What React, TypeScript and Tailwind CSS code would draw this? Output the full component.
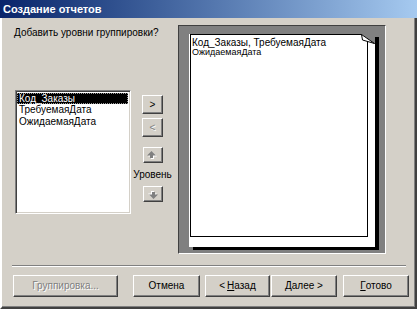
const raised =
  'border border-t-white border-l-white border-r-[#404040] border-b-[#404040] shadow-[inset_-1px_-1px_0_#808080] bg-[#d4d0c8]';
const disabledText = 'text-[#808080] [text-shadow:1px_1px_0_#ffffff]';

function Btn({ w, h, children, disabled }: { w: string; h: string; children: React.ReactNode; disabled?: boolean }) {
  return (
    <div className={`${raised} ${w} ${h} flex items-center justify-center text-[10px] leading-none ${disabled ? disabledText : 'text-black'}`}>
      {children}
    </div>
  );
}

function Arrow({ down }: { down?: boolean }) {
  const pts = '4.5,0 9,4.5 6,4.5 6,7 3,7 3,4.5 0,4.5';
  return (
    <svg width="11" height="9" viewBox="0 0 11 9" className={down ? 'rotate-180' : ''}>
      <polygon points={pts} fill="#ffffff" transform="translate(1 1)" />
      <polygon points={pts} fill="#808080" />
    </svg>
  );
}

export default function App() {
  return (
    <div className="w-[417px] h-[309px] flex flex-col bg-[#d4d0c8] overflow-hidden font-['Liberation_Sans',Arial,sans-serif]">
      {/* Title bar */}
      <div className="h-[18px] shrink-0 flex items-center pl-[3px] bg-gradient-to-r from-[#0a246a] to-[#a6caf0] text-white font-bold text-[11px]">
        Создание отчетов
      </div>

      {/* Body */}
      <div className="flex-1 flex flex-col border-l-2 border-l-[#ffffff] border-r-2 border-r-[#404040] border-b-2 border-b-[#404040] shadow-[inset_-1px_-1px_0_#808080]">
        <div className="flex pt-[7px] pl-[12px]">
          {/* Left column */}
          <div className="w-[164px] flex flex-col">
            <div className="mt-[1px] text-[10px] leading-[13px] text-black">Добавить уровни группировки?</div>
            <div className="flex mt-[51px] ml-[1px]">
              <div className="w-[116px] h-[124px] bg-white border border-t-[#808080] border-l-[#808080] border-r-white border-b-white shadow-[inset_1px_1px_0_#404040,inset_-1px_-1px_0_#d4d0c8] p-[2px] pl-[1px] text-[10px] leading-[12px]">
                <div className="bg-black text-white border border-dotted border-[#999999] px-[1px] h-[11px] leading-[9px]">Код_Заказы</div>
                <div className="px-[2px] text-black">ТребуемаяДата</div>
                <div className="px-[2px] text-black">ОжидаемаяДата</div>
              </div>
              <div className="ml-[11px] w-[21px] flex flex-col items-center">
                <div className="mt-[5px]">
                  <Btn w="w-[21px]" h="h-[19px]">&gt;</Btn>
                </div>
                <div className="mt-[4px]">
                  <Btn w="w-[21px]" h="h-[19px]" disabled>&lt;</Btn>
                </div>
                <div className="mt-[10px]">
                  <Btn w="w-[20px]" h="h-[16px]"><Arrow /></Btn>
                </div>
                <div className="mt-[5px] h-[13px] text-[10px] leading-[13px] whitespace-nowrap text-black">Уровень</div>
                <div className="mt-[5px]">
                  <Btn w="w-[20px]" h="h-[16px]"><Arrow down /></Btn>
                </div>
              </div>
            </div>
          </div>

          {/* Preview frame */}
          <div className="w-[208px] h-[229px] bg-[#808080] border border-t-[#404040] border-l-[#404040] border-r-white border-b-white pt-[8px] pl-[10px]">
            <div className="relative w-[186px] h-[213px] bg-white pl-[1px] shadow-[4px_3px_0_#000000]">
              <div className="w-[178px] h-[203px] border border-black pl-[1px] pt-[3px] text-black">
                <div className="text-[10px] leading-[10px]">Код_Заказы, ТребуемаяДата</div>
                <div className="text-[9px] leading-[9px]">ОжидаемаяДата</div>
              </div>
              <svg width="14" height="11" viewBox="0 0 14 11" className="absolute top-0 right-0">
                <polygon points="0,0 14,0 14,10" fill="#808080" />
                <polygon points="0.5,0.5 1.5,6 13.5,9.5" fill="#ffffff" stroke="#000000" strokeWidth="1" />
              </svg>
            </div>
          </div>
        </div>

        {/* Separator */}
        <div className="mt-[11px] ml-[10px] w-[394px] h-[2px] border-t border-t-[#808080] border-b border-b-white" />

        {/* Buttons */}
        <div className="flex mt-[8px] pl-[11px]">
          <Btn w="w-[105px]" h="h-[22px]" disabled>Группировка...</Btn>
          <div className="ml-[15px]">
            <Btn w="w-[67px]" h="h-[22px]">Отмена</Btn>
          </div>
          <div className="ml-[5px]">
            <Btn w="w-[65px]" h="h-[22px]">&lt; <span className="underline ml-[2px]">Н</span>азад</Btn>
          </div>
          <div className="ml-[1px]">
            <Btn w="w-[66px]" h="h-[22px]"><span className="underline">Д</span>алее &gt;</Btn>
          </div>
          <div className="ml-[6px]">
            <Btn w="w-[66px]" h="h-[22px]"><span className="underline">Г</span>отово</Btn>
          </div>
        </div>
      </div>
    </div>
  );
}
